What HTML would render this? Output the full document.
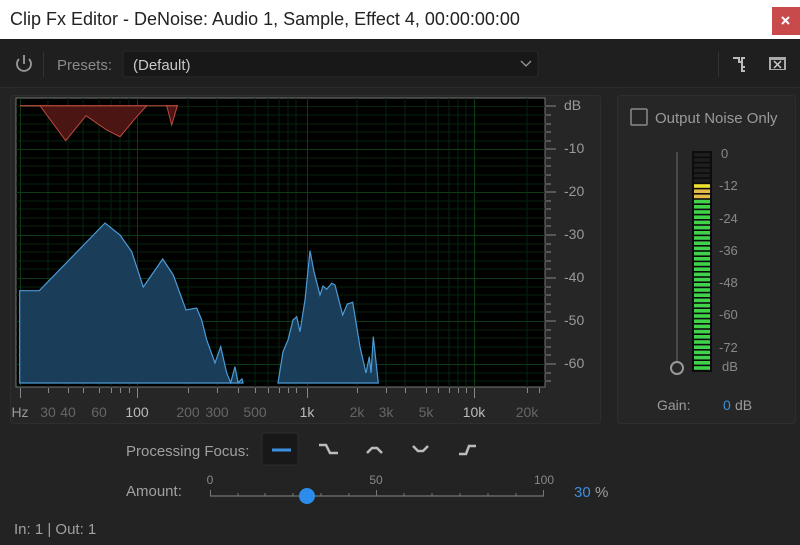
<!DOCTYPE html>
<html><head><meta charset="utf-8"><style>
body{margin:0;width:800px;height:540px;overflow:hidden;background:#232323;font-family:"Liberation Sans",sans-serif;}
</style></head><body>
<svg width="800" height="540" xmlns="http://www.w3.org/2000/svg" font-family="Liberation Sans, sans-serif">
<rect x="0" y="0" width="800" height="540" fill="#232323"/>
<rect x="0" y="0" width="800" height="39" fill="#fff"/>
<text x="10" y="25" font-size="18" fill="#222">Clip Fx Editor - DeNoise: Audio 1, Sample, Effect 4, 00:00:00:00</text>
<rect x="772" y="7" width="28" height="28" fill="#c94a4b"/>
<path d="M782 17l7 7M789 17l-7 7" stroke="#fff" stroke-width="2"/>
<rect x="0" y="39" width="800" height="49" fill="#1f1f1f"/>
<line x1="0" y1="87.5" x2="800" y2="87.5" stroke="#2c2c2c"/>
<path d="M19 59a7 7 0 1 0 10 0" fill="none" stroke="#9a9a9a" stroke-width="1.8"/>
<line x1="24" y1="55" x2="24" y2="64" stroke="#9a9a9a" stroke-width="1.8"/>
<line x1="43.5" y1="52" x2="43.5" y2="77" stroke="#333"/>
<text x="57" y="70" font-size="15" fill="#8a8a8a">Presets:</text>
<rect x="123" y="51" width="415" height="26" rx="3" fill="#181818" stroke="#2a2a2a"/>
<text x="133" y="70" font-size="15" fill="#c8c8c8">(Default)</text>
<path d="M521 61l5 5 5-5" fill="none" stroke="#999" stroke-width="1.3"/>
<line x1="718.5" y1="52" x2="718.5" y2="77" stroke="#333"/>
<path d="M733 58h6v4h3v-4h3M742 62v5h3M742 67v4h3" fill="none" stroke="#bbb" stroke-width="2"/>
<rect x="769" y="57" width="17" height="13" fill="#aaa"/>
<rect x="771" y="60" width="13" height="9" fill="#222"/>
<path d="M774 61l7 7M781 61l-7 7" stroke="#ccc" stroke-width="1.5"/>
<rect x="10.5" y="95.5" width="590" height="328" rx="3" fill="#262626" stroke="#2e2e2e"/>
<rect x="16" y="98" width="529" height="289" fill="#000" stroke="#777"/>
<g stroke="#08220c" stroke-width="1">
<path d="M16 106.5h529M16 115h529M16 124h529M16 132h529M16 141h529M16 158h529M16 166h529M16 175h529M16 184h529M16 201h529M16 209h529M16 218h529M16 226h529M16 244h529M16 252h529M16 261h529M16 269h529M16 287h529M16 295h529M16 304h529M16 312h529M16 330h529M16 338h529M16 347h529M16 355h529M16 373h529M16 381h529"/>
<path d="M48 98v289M68 98v289M83 98v289M99 98v289M111 98v289M120 98v289M129 98v289M188 98v289M217 98v289M238 98v289M255 98v289M268 98v289M279 98v289M288 98v289M296 98v289M357 98v289M386 98v289M405 98v289M426 98v289M438 98v289M449 98v289M458 98v289M466 98v289M527 98v289"/>
</g>
<g stroke="#0e3a15" stroke-width="1">
<path d="M16 149.5h529M16 192.5h529M16 235.5h529M16 278.5h529M16 321.5h529M16 364.5h529"/>
<path d="M20.5 98v289M137.5 98v289M307.5 98v289M474.5 98v289"/>
</g>
<polygon points="20,105.7 40,105.7 65.7,140.7 86,115.7 106.7,130 120,136.7 136.7,116.7 146.7,105.7" fill="#4a1512" stroke="#c0493f"/>
<polygon points="166.7,105.7 171.7,125 177.3,105.7" fill="#4a1512" stroke="#c0493f"/>
<line x1="20" y1="105.7" x2="178" y2="105.7" stroke="#c0493f"/>
<polygon points="19.7,383 19.7,290.7 39.3,290.7 105,223 120,235 131.7,251.7 143.3,287 162.7,259 173.3,275 186,310 196.7,308 201.7,320 206.7,340 215,363 220.7,346.7 226.7,373 230.7,382.7 235,366.7 238,382.7 242,379 243,383" fill="#1a3d5a" stroke="#4b9bd6" stroke-width="1.2"/>
<polygon points="278,383 283,351.7 288,340 293,320 296.7,316.7 300,331.7 305,300 310,250.7 314,271.7 320,295 323,286 326.7,289.3 331.7,283.3 335,285 342.7,315 347.3,304 352.7,302.3 360,346.7 366,373 369.3,356.7 371,373 373.3,336.7 378.3,383" fill="#1a3d5a" stroke="#4b9bd6" stroke-width="1.2"/>
<g stroke="#888">
<path d="M546 106h10M546 149h10M546 192h10M546 235h10M546 278h10M546 321h10M546 364h10"/>
<path d="M546 115h5M546 124h5M546 132h5M546 141h5M546 158h5M546 166h5M546 175h5M546 184h5M546 201h5M546 209h5M546 218h5M546 226h5M546 244h5M546 252h5M546 261h5M546 269h5M546 287h5M546 295h5M546 304h5M546 312h5M546 330h5M546 338h5M546 347h5M546 355h5M546 373h5M546 381h5"/>
<path d="M20.5 388v10M48.5 388v5M68.5 388v5M83.5 388v5M99.5 388v5M111.5 388v5M120.5 388v5M129.5 388v5M137.5 388v10M188.5 388v5M217.5 388v5M238.5 388v5M255.5 388v5M268.5 388v5M279.5 388v5M288.5 388v5M296.5 388v5M307.5 388v10M357.5 388v5M386.5 388v5M405.5 388v5M426.5 388v5M438.5 388v5M449.5 388v5M458.5 388v5M466.5 388v5M474.5 388v10M527.5 388v5M539.5 388v5"/>
</g>
<g font-size="14" fill="#9a9a9a">
<text x="564" y="110">dB</text><text x="564" y="153">-10</text><text x="564" y="196">-20</text><text x="564" y="239">-30</text><text x="564" y="282">-40</text><text x="564" y="325">-50</text><text x="564" y="368">-60</text>
</g>
<g font-size="14" fill="#666" text-anchor="middle">
<text x="20" y="417" fill="#9a9a9a">Hz</text><text x="48" y="417">30</text><text x="68" y="417">40</text><text x="99" y="417">60</text><text x="137" y="417" fill="#bbb">100</text><text x="188" y="417">200</text><text x="217" y="417">300</text><text x="255" y="417">500</text><text x="307" y="417" fill="#bbb">1k</text><text x="357" y="417">2k</text><text x="386" y="417">3k</text><text x="426" y="417">5k</text><text x="474" y="417" fill="#bbb">10k</text><text x="527" y="417">20k</text>
</g>
<rect x="617.5" y="95.5" width="178" height="328" rx="3" fill="#262626" stroke="#2e2e2e"/>
<rect x="631" y="109" width="16" height="16" rx="1" fill="none" stroke="#8a8a8a" stroke-width="1.5"/>
<text x="655" y="123" font-size="15" fill="#9a9a9a">Output Noise Only</text>
<line x1="677" y1="152" x2="677" y2="362" stroke="#4a4a4a" stroke-width="2"/>
<circle cx="677" cy="368" r="6" fill="none" stroke="#999" stroke-width="2"/>
<rect x="692" y="151" width="20" height="221" fill="#0c0c0c"/>
<g id="segs"></g>
<g font-size="13" fill="#888">
<text x="721" y="158">0</text><text x="719" y="190">-12</text><text x="719" y="223">-24</text><text x="719" y="255">-36</text><text x="719" y="287">-48</text><text x="719" y="319">-60</text><text x="719" y="352">-72</text><text x="722" y="371">dB</text>
</g>
<text x="657" y="410" font-size="14" fill="#9a9a9a">Gain:</text>
<text x="723" y="410" font-size="14" fill="#3b8fe0">0</text>
<text x="735" y="410" font-size="14" fill="#9a9a9a">dB</text>
<text x="126" y="456" font-size="15" fill="#a0a0a0">Processing Focus:</text>
<rect x="262" y="433" width="36" height="32" rx="2" fill="#181818" stroke="#2c2c2c"/>
<line x1="272" y1="450" x2="291" y2="450" stroke="#3b8fe0" stroke-width="3"/>
<g fill="none" stroke="#bbb" stroke-width="2.5">
<path d="M319 445h7l4 8h8"/>
<path d="M367 453l5-5h5l5 5"/>
<path d="M413 446l5 5h5l5-5"/>
<path d="M459 454h7l3-8h7"/>
</g>
<text x="126" y="496" font-size="15" fill="#a0a0a0">Amount:</text>
<g font-size="12" fill="#888" text-anchor="middle"><text x="210" y="484">0</text><text x="376" y="484">50</text><text x="544" y="484">100</text></g>
<line x1="210" y1="496" x2="544" y2="496" stroke="#555" stroke-width="2"/>
<path d="M210.5 490v6M543.5 490v6M376.5 490v6M238 493v3M265 493v3M293 493v3M321 493v3M349 493v3M404 493v3M432 493v3M460 493v3M488 493v3M516 493v3" stroke="#777"/>
<circle cx="307" cy="496" r="8" fill="#2d8ceb"/>
<text x="574" y="497" font-size="15" fill="#3b8fe0">30</text>
<text x="595" y="497" font-size="15" fill="#a0a0a0">%</text>
<text x="14" y="534" font-size="15" fill="#a0a0a0">In: 1 | Out: 1</text>
</svg>
<script>
var g=document.getElementById('segs'),s='';
for(var i=0;i<42;i++){var y=153+i*5.2;var c=y<180?'#1e1e1e':(y<186?'#f0e030':(y<195?'#e5b84a':'#3fd24a'));s+='<rect x="694" y="'+y+'" width="16" height="3.6" fill="'+c+'"/>';}
g.innerHTML=s;
</script>
</body></html>
